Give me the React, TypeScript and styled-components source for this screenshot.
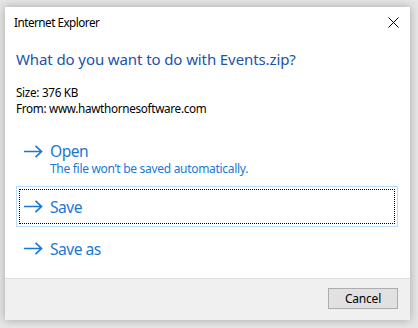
import React from "react";
import styled, { createGlobalStyle } from "styled-components";

const Global = createGlobalStyle`
  html, body { margin: 0; padding: 0; }
  body {
    background: #e6e6e6;
    font-family: "Noto Sans", "Open Sans", sans-serif;
    width: 418px;
    height: 328px;
    overflow: hidden;
  }
`;

const Window = styled.div`
  margin: 7px 0 0 5px;
  width: 405px;
  height: 313px;
  background: #ffffff;
  box-shadow: 0 0 9px rgba(0, 0, 0, 0.28);
  display: flex;
  flex-direction: column;
`;

const TitleBar = styled.div`
  height: 30px;
  display: flex;
  align-items: center;
  justify-content: space-between;
  padding: 0 11px 0 9px;
`;

const Title = styled.span`
  font-size: 11.7px;
  color: #000;
  letter-spacing: -0.5px;
`;

const CloseButton = styled.button`
  width: 12px;
  height: 12px;
  padding: 0;
  border: none;
  background: transparent;
  display: flex;
  align-items: center;
  justify-content: center;
`;

const Body = styled.div`
  flex: 1;
  display: flex;
  flex-direction: column;
  padding: 0 12px 0 11px;
`;

const Heading = styled.div`
  margin-top: 11px;
  font-size: 15px;
  line-height: 22px;
  color: #2352ad;
  letter-spacing: -0.1px;
`;

const Info = styled.div`
  margin-top: 14px;
  font-size: 11.7px;
  line-height: 16px;
  color: #000;
  letter-spacing: -0.3px;
`;

const Options = styled.div`
  margin-top: 21px;
  display: flex;
  flex-direction: column;
  gap: 1px;
`;

const Option = styled.div<{ $focused?: boolean; $tall?: boolean }>`
  position: relative;
  height: ${(p) => (p.$tall ? 48 : 41)}px;
  box-sizing: border-box;
  border: 1px solid ${(p) => (p.$focused ? "#b9dcfb" : "transparent")};
  display: flex;
  align-items: ${(p) => (p.$tall ? "flex-start" : "center")};
  padding: ${(p) => (p.$tall ? "3px 0 0 7px" : "0 0 0 7px")};
  ${(p) =>
    p.$focused &&
    `&::after {
      content: "";
      position: absolute;
      inset: 2px;
      border: 1px dotted #000;
    }`}
`;

const ArrowBox = styled.div`
  width: 26px;
  height: 20px;
  display: flex;
  align-items: center;
  flex-shrink: 0;
`;

const OptionText = styled.div`
  display: flex;
  flex-direction: column;
`;

const OptionTitle = styled.span`
  font-size: 15.6px;
  line-height: 20px;
  color: #1a78d4;
  letter-spacing: -0.5px;
`;

const OptionSub = styled.span`
  font-size: 12px;
  line-height: 16px;
  color: #1a78d4;
  letter-spacing: -0.3px;
`;

const Footer = styled.div`
  height: 42px;
  box-sizing: border-box;
  background: #f0f0f0;
  border-top: 1px solid #dfdfdf;
  display: flex;
  justify-content: flex-end;
  align-items: flex-start;
  padding: 9px 12px 0 0;
`;

const Button = styled.button`
  width: 70px;
  height: 21px;
  box-sizing: border-box;
  background: #e1e1e1;
  border: 1px solid #adadad;
  font-family: "Noto Sans", "Open Sans", sans-serif;
  font-size: 12px;
  color: #000;
  padding: 0;
  letter-spacing: -0.2px;
`;

const Arrow = () => (
  <svg width="19" height="13" viewBox="0 0 19 13">
    <path
      d="M0 6.5 H17.5 M11.5 0.8 L17.5 6.5 L11.5 12.2"
      fill="none"
      stroke="#1a78d4"
      strokeWidth="1.7"
    />
  </svg>
);

const CloseIcon = () => (
  <svg width="11" height="11" viewBox="0 0 11 11">
    <path d="M0.5 0.5 L10.5 10.5 M10.5 0.5 L0.5 10.5" stroke="#000" strokeWidth="1" />
  </svg>
);

export default function App() {
  return (
    <>
      <Global />
      <Window>
        <TitleBar>
          <Title>Internet Explorer</Title>
          <CloseButton aria-label="Close">
            <CloseIcon />
          </CloseButton>
        </TitleBar>
        <Body>
          <Heading>What do you want to do with Events.zip?</Heading>
          <Info>
            <div>Size: 376 KB</div>
            <div>From: www.hawthornesoftware.com</div>
          </Info>
          <Options>
            <Option $tall>
              <ArrowBox>
                <Arrow />
              </ArrowBox>
              <OptionText>
                <OptionTitle>Open</OptionTitle>
                <OptionSub>The file won’t be saved automatically.</OptionSub>
              </OptionText>
            </Option>
            <Option $focused>
              <ArrowBox>
                <Arrow />
              </ArrowBox>
              <OptionTitle>Save</OptionTitle>
            </Option>
            <Option>
              <ArrowBox>
                <Arrow />
              </ArrowBox>
              <OptionTitle>Save as</OptionTitle>
            </Option>
          </Options>
        </Body>
        <Footer>
          <Button>Cancel</Button>
        </Footer>
      </Window>
    </>
  );
}
